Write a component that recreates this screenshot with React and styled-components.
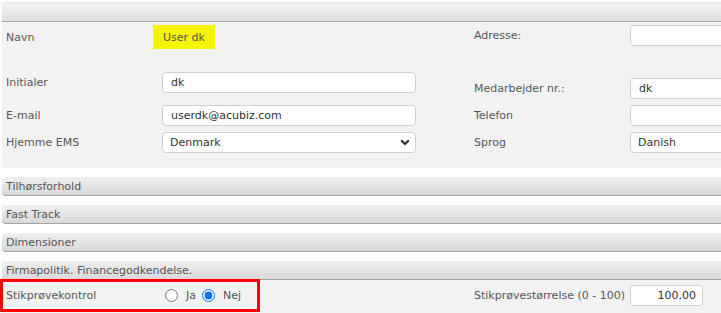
import React from "react";
import styled, { createGlobalStyle } from "styled-components";

const Global = createGlobalStyle`
  html, body {
    margin: 0;
    padding: 0;
    background: #fff;
    overflow: hidden;
  }
  body {
    font-family: "DejaVu Sans", Verdana, sans-serif;
    font-size: 11px;
    color: #555;
  }
`;

const Viewport = styled.div`
  width: 100vw;
  overflow: hidden;
`;

const Page = styled.div`
  width: 780px;
  padding: 2px 0 0 2px;
  display: flex;
  flex-direction: column;
`;

const HeaderBar = styled.div`
  height: 18px;
  border-top: 1px solid #e6e6e6;
  border-bottom: 1px solid #a6a6a6;
  border-radius: 4px 4px 0 0;
  background: linear-gradient(#f3f3f3, #dedede);
`;

const Panel = styled.div`
  background: #f2f2f2;
  border-radius: ${(p) => (p.$open ? "0" : "0 0 4px 4px")};
  padding: 0 0 ${(p) => p.$pb || 0}px 4px;
  display: flex;
`;

const Table = styled.div`
  display: flex;
  flex-direction: column;
  width: ${(p) => p.$w}px;
`;

const Row = styled.div`
  display: flex;
  align-items: center;
  height: ${(p) => p.$h}px;
`;

const Label = styled.div`
  width: ${(p) => p.$w}px;
  flex: none;
  color: #575757;
  white-space: nowrap;
`;

const Highlight = styled.div`
  background: #f4f400;
  height: 24px;
  padding: 0 10px;
  display: flex;
  align-items: center;
  color: #555;
`;

const Input = styled.input`
  box-sizing: border-box;
  height: 21px;
  width: ${(p) => p.$w}px;
  margin-left: ${(p) => p.$ml || 0}px;
  border: 1px solid #cfcfcf;
  border-radius: 4px;
  background: #fff;
  padding: 0 ${(p) => (p.$right ? 6 : 8)}px 0 8px;
  font: inherit;
  font-size: 11px;
  color: #333;
  text-align: ${(p) => (p.$right ? "right" : "left")};
  outline: none;
`;

const SelectWrap = styled.div`
  position: relative;
  width: ${(p) => p.$w}px;
  margin-left: ${(p) => p.$ml || 0}px;
`;

const Select = styled.select`
  appearance: none;
  box-sizing: border-box;
  width: 100%;
  height: 21px;
  border: 1px solid #cfcfcf;
  border-radius: 4px;
  background: #fff;
  padding: 0 20px 0 7px;
  font: inherit;
  font-size: 11px;
  color: #333;
  outline: none;
`;

const Chevron = styled.svg`
  position: absolute;
  right: 6px;
  top: 7px;
  pointer-events: none;
`;

const Bar = styled.div`
  box-sizing: border-box;
  height: 19px;
  margin-top: 9px;
  padding-left: 4px;
  display: flex;
  align-items: center;
  border-bottom: 1px solid #a2a2a2;
  border-radius: 4px;
  background: linear-gradient(#efefef, #d9d9d9);
  color: #555;
`;

const RedBox = styled.div`
  box-sizing: border-box;
  width: 260px;
  height: 33px;
  margin: -2px 0 0 -6px;
  border: 3px solid #f00;
  display: flex;
  align-items: center;
  padding-left: 3px;
`;

const Radio = styled.label`
  display: flex;
  align-items: center;
  gap: 8px;
  margin-right: 6px;
  input {
    margin: 0;
    width: 13px;
    height: 13px;
  }
`;

const Chev = () => (
  <Chevron width="10" height="7" viewBox="0 0 10 7">
    <path d="M1.2 1.4 L5 5 L8.8 1.4" fill="none" stroke="#333" strokeWidth="2.2" />
  </Chevron>
);

export default function App() {
  return (
    <Viewport>
      <Global />
      <Page>
        <HeaderBar />
        <Panel $pb={14}>
          <Table $w={468}>
            <Row $h={30}>
              <Label $w={147}>Navn</Label>
              <Highlight>User dk</Highlight>
            </Row>
            <Row $h={14} />
            <Row $h={32}>
              <Label $w={147}>Initialer</Label>
              <Input $w={254} $ml={9} defaultValue="dk" />
            </Row>
            <Row $h={34}>
              <Label $w={147}>E-mail</Label>
              <Input $w={254} $ml={9} defaultValue="userdk@acubiz.com" />
            </Row>
            <Row $h={20}>
              <Label $w={147}>Hjemme EMS</Label>
              <SelectWrap $w={254} $ml={9}>
                <Select defaultValue="Denmark">
                  <option>Denmark</option>
                </Select>
                <Chev />
              </SelectWrap>
            </Row>
          </Table>
          <Table $w={300}>
            <Row $h={26}>
              <Label $w={156}>Adresse:</Label>
              <Input $w={150} defaultValue="" />
            </Row>
            <Row $h={28} />
            <Row $h={24}>
              <Label $w={156}>Medarbejder nr.:</Label>
              <Input $w={150} defaultValue="dk" />
            </Row>
            <Row $h={30}>
              <Label $w={156}>Telefon</Label>
              <Input $w={150} defaultValue="" />
            </Row>
            <Row $h={24}>
              <Label $w={156}>Sprog</Label>
              <SelectWrap $w={150}>
                <Select defaultValue="Danish">
                  <option>Danish</option>
                </Select>
              </SelectWrap>
            </Row>
          </Table>
        </Panel>
        <Bar>Tilhørsforhold</Bar>
        <Bar>Fast Track</Bar>
        <Bar>Dimensioner</Bar>
        <Bar>Firmapolitik. Financegodkendelse.</Bar>
        <Panel $open>
          <Table $w={468}>
            <Row $h={33}>
              <RedBox>
                <Label $w={159}>Stikprøvekontrol</Label>
                <Radio>
                  <input type="radio" name="stik" />
                  Ja
                </Radio>
                <Radio>
                  <input type="radio" name="stik" defaultChecked />
                  Nej
                </Radio>
              </RedBox>
            </Row>
          </Table>
          <Table $w={300}>
            <Row $h={30}>
              <Label $w={156}>Stikprøvestørrelse (0 - 100)</Label>
              <Input $w={73} $right defaultValue="100,00" />
            </Row>
          </Table>
        </Panel>
      </Page>
    </Viewport>
  );
}
